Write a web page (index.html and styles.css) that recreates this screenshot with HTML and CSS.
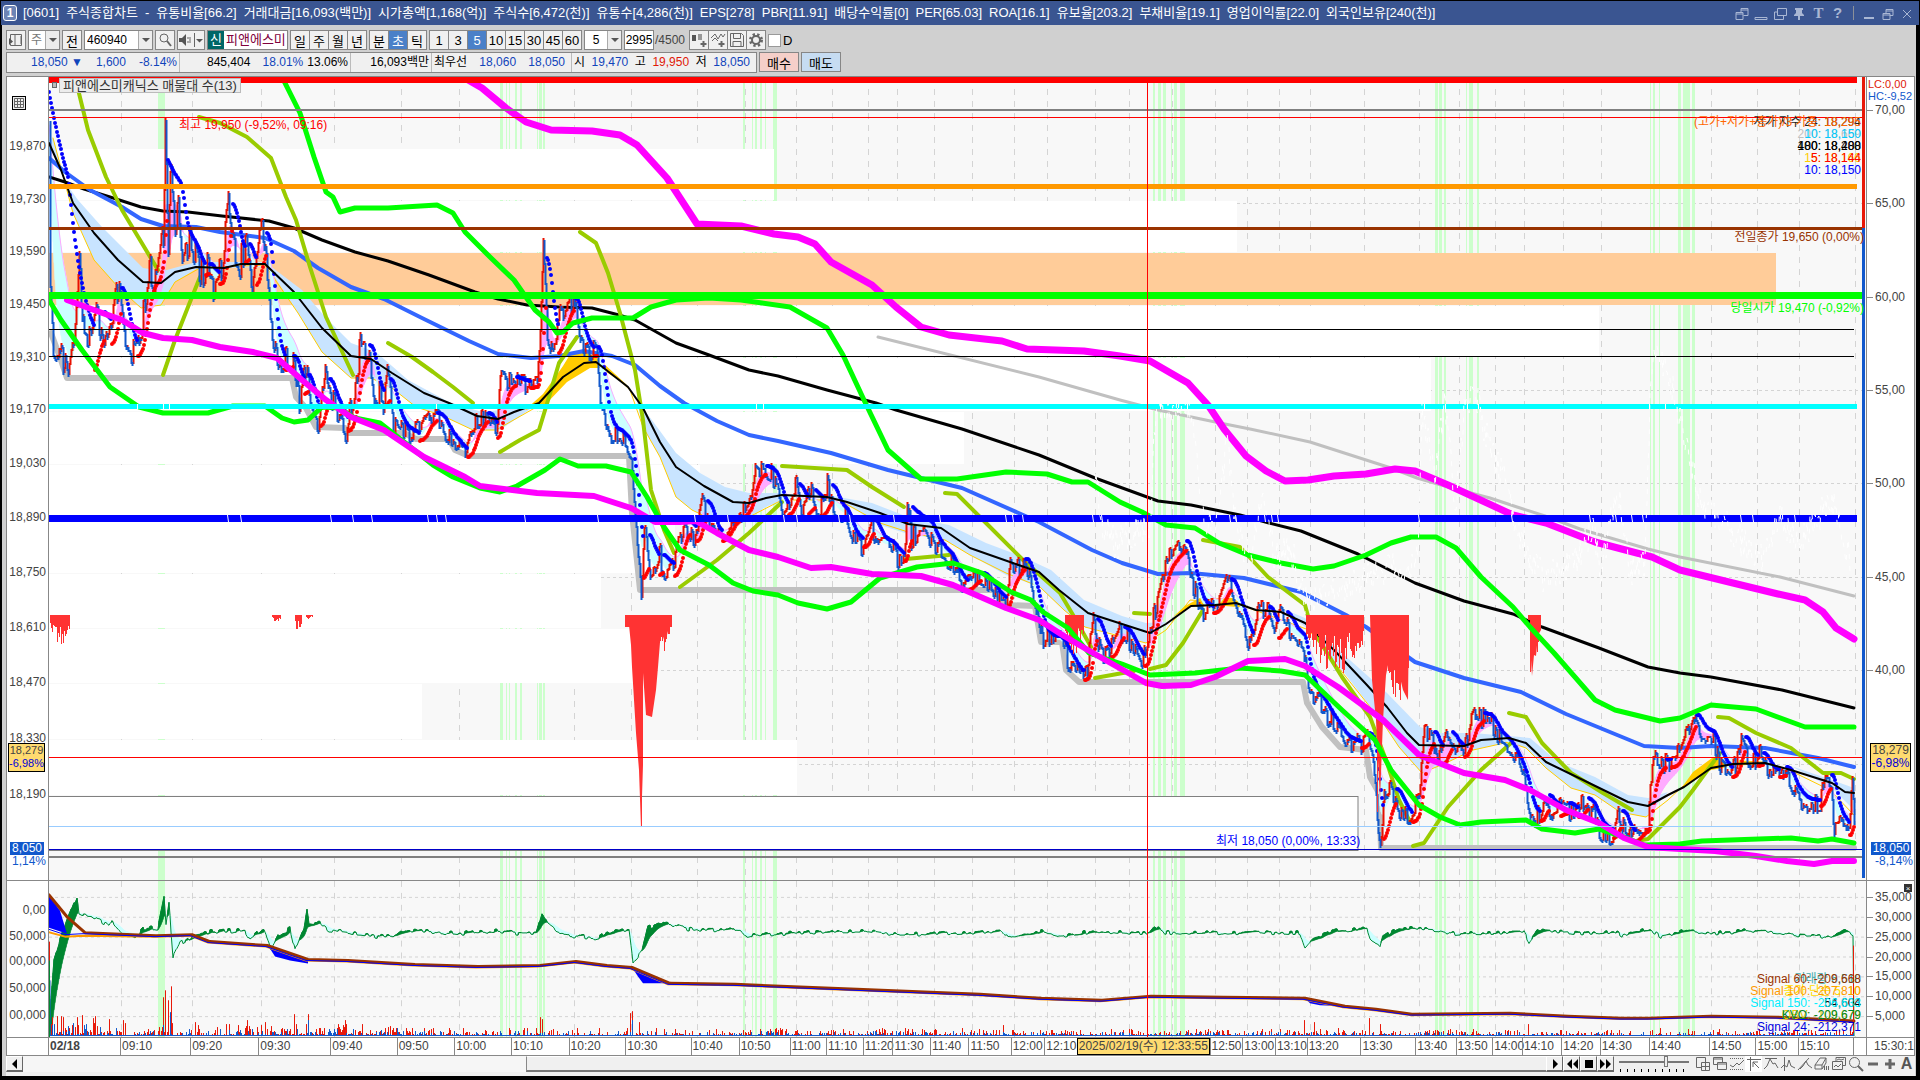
FILE: index.html
```html
<!DOCTYPE html>
<html lang="ko">
<head>
<meta charset="utf-8">
<title>[0601] 주식종합차트</title>
<link rel="stylesheet" href="styles.css">
</head>
<body>
<div class="window">
  <header class="titlebar">
    <span class="win-no">1</span>
    <h1 class="title"><span>[0601]</span><span>주식종합차트</span><span>-</span><span>유통비율[66.2]</span><span>거래대금[16,093(백만)]</span><span>시가총액[1,168(억)]</span><span>주식수[6,472(천)]</span><span>유통수[4,286(천)]</span><span>EPS[278]</span><span>PBR[11.91]</span><span>배당수익률[0]</span><span>PER[65.03]</span><span>ROA[16.1]</span><span>유보율[203.2]</span><span>부채비율[19.1]</span><span>영업이익률[22.0]</span><span>외국인보유[240(천)]</span></h1>
    <div class="win-tools">
      <button aria-label="화면 분리"><svg width="14" height="14"><path d="M1 5.500h7v7H1zM6 5V1.500h7v7H8.500M6 3h7M1 7h7"/></svg></button>
      <button aria-label="접기"><svg width="14" height="14"><path d="M1 10.500h12v2H1z"/></svg></button>
      <button aria-label="복제"><svg width="14" height="14"><path d="M4.500 1.500h9v7h-9zM4 5H1.500v7.500h9V9"/></svg></button>
      <button aria-label="고정"><svg width="14" height="14"><path class="solid" d="M3 1h8v2h-1v3l2 2v1H8v4H6V9H2V8l2-2V3H3z"/></svg></button>
      <button class="glyph serif" aria-label="글꼴">T</button>
      <button class="glyph" aria-label="도움말">?</button>
      <span class="win-rule"></span>
      <button aria-label="최소화"><svg width="14" height="14"><path class="solid" d="M2 10h10v2H2z"/></svg></button>
      <button aria-label="이전 크기"><svg width="14" height="14"><path d="M2 6.500h7v6H2zM5 6V2.500h7v6H9M5 4h7M2 8h7"/></svg></button>
      <button aria-label="닫기"><svg width="14" height="14"><path d="M3 3l8 8M11 3l-8 8"/></svg></button>
    </div>
  </header>

  <div class="body">
    <div class="toolbar">
      <button class="tool w-20" aria-label="메뉴"><svg width="16" height="14"><path d="M2.500 7V1.500h11v11h-11V11M7 1.500v11M13 3v8"/><path class="solid" d="M1 5l4 3.500L1 12z"/></svg></button>
      <label class="combo w-31"><span class="sr">구분</span><select><option>주</option></select><i></i></label>
      <button class="tool w-20">전</button>
      <label class="combo w-69 black"><span class="sr">종목코드</span><input type="text" value="460940"><i></i></label>
      <button class="tool w-20" aria-label="종목 검색"><svg width="16" height="16"><circle cx="7" cy="6" r="4"/><path class="thick" d="M10 9l4 5"/></svg></button>
      <button class="tool w-28" aria-label="소리"><svg width="26" height="14"><path class="dark" d="M1 5h3l4-4v12L4 9H1z"/><path d="M10 4v2M10 8v2M12 4v6M16.500 0v14"/><path class="solid" d="M18 6h7l-3.500 3.500z"/></svg></button>
      <div class="stock"><b>신</b><span>피앤에스미</span></div>
      <div class="seg"><button>일</button><button>주</button><button>월</button><button>년</button></div>
      <div class="seg"><button>분</button><button class="on">초</button><button>틱</button></div>
      <div class="seg"><button>1</button><button>3</button><button class="on">5</button><button>10</button><button>15</button><button>30</button><button>45</button><button>60</button></div>
      <label class="combo w-38 black"><span class="sr">주기</span><input type="text" value="5"><i></i></label>
      <label class="count"><span class="sr">조회 건수</span><input type="text" value="2995"><span>/4500</span></label>
      <div class="seg icons">
        <button aria-label="차트 추가"><svg width="16" height="16"><path class="dark" d="M1 3h4v6H1zM2.500 1v10"/><path class="mute" d="M7 2h4v6H7z"/><path class="thick" d="M12.500 9v6M9.500 12h6"/></svg></button>
        <button aria-label="지표 추가"><svg width="16" height="16"><path d="M1 6l4-4 3 5 3-5 2 3 2-3M2 9l3-3 3 3"/><path class="thick" d="M11.500 9v6M8.500 12h6"/></svg></button>
        <button aria-label="저장"><svg width="16" height="16"><path d="M1.500 1.500h11l2 2v11h-13zM4.500 1.500v5h7v-5M4 14V9.500h8V14"/></svg></button>
        <button aria-label="설정"><svg width="16" height="16"><circle class="cog" cx="8" cy="8" r="5"/><circle class="ring" cx="8" cy="8" r="4"/></svg></button>
      </div>
      <label class="check"><input type="checkbox"><span>D</span></label>
    </div>

    <div class="quote">
      <div class="strip">
        <div class="cell c-first down"><span>18,050 ▼</span><span>1,600</span><span>-8.14%</span></div>
        <div class="cell c-volume"><span>845,404</span><span class="pair"><span class="down">18.01%</span><span>13.06%</span></span></div>
        <div class="cell c-amount"><span>16,093백만</span></div>
        <div class="cell c-best"><span>최우선</span><span class="down">18,060</span><span class="down">18,050</span></div>
        <div class="cell grow"><span>시</span><span class="down">19,470</span><span>고</span><span class="up">19,950</span><span>저</span><span class="down">18,050</span></div>
      </div>
      <button class="order buy">매수</button>
      <button class="order sell">매도</button>
    </div>

    <main class="chart">
      <div class="axis left" id="left-main"><button class="grid-btn" aria-label="표 보기"><svg width="12" height="12"><path d="M1.500 1.500h9v9h-9zM1.500 4.500h9M1.500 7.500h9M4.500 1.500v9M7.500 1.500v9"/></svg></button></div>
      <div class="pane" id="pane-main"></div>
      <div class="axis right" id="right-main"></div>
      <div class="axis left lower" id="left-sub"></div>
      <div class="pane lower" id="pane-sub"></div>
      <div class="axis right lower" id="right-sub"><button class="pane-close" aria-label="지표 닫기">×</button></div>
      <div class="times-pad"></div>
      <div class="times" id="times"></div>
      <div class="times-end">15:30:1</div>
    </main>

    <footer class="bottom">
      <button class="nav" aria-label="왼쪽으로"><svg width="12" height="12"><path class="ink" d="M8 1v10L3 6z"/></svg></button>
      <div class="track"><div class="thumb"></div></div>
      <div class="play">
        <button class="nav" aria-label="오른쪽으로"><svg width="12" height="12"><path class="ink" d="M4 1v10l5-5z"/></svg></button>
        <button class="nav" aria-label="뒤로"><svg width="12" height="12"><path class="ink" d="M6 1v10L1 6zM12 1v10L7 6z"/></svg></button>
        <button class="nav" aria-label="정지"><svg width="12" height="12"><path class="ink" d="M2 2h8v8H2z"/></svg></button>
        <button class="nav" aria-label="앞으로"><svg width="12" height="12"><path class="ink" d="M0 1v10l5-5zM6 1v10l5-5z"/></svg></button>
      </div>
      <label class="zoomer"><span class="sr">확대 비율</span><input type="range" min="0" max="100" value="68"></label>
      <div class="draw">
        <button aria-label="창 추가"><svg width="16" height="16"><path d="M6 11.500H1.500V1.500h9V6M6.500 6.500h8v8h-8zM10.500 6v9M6 10.500h9"/></svg></button>
        <button aria-label="창 겹치기"><svg width="16" height="16"><path d="M1.500 1.500h9v7h-9zM1 3h10"/><path class="face" d="M5.500 6.500h9v7h-9z"/><path d="M5 8h10"/></svg></button>
        <button aria-label="구간"><svg width="16" height="16"><path class="dots" d="M1 2.500h14M1 13.500h14"/><path d="M1 9l3 2 4-4 2 2 5-5"/></svg></button>
        <button class="on" aria-label="십자선"><svg width="16" height="16"><path d="M1 3.500h14M4.500 1v14M7 6l6 6M7 11V6h5"/></svg></button>
        <button aria-label="수평선"><svg width="16" height="16"><path d="M2 2.500h12M1 13l3-3 3-7 3 5 2-1 3 5"/></svg></button>
        <button aria-label="수직선"><svg width="16" height="16"><path d="M4.500 1v14M1 12l3-3 3 2 2-7 2 6 4 2"/></svg></button>
        <button aria-label="추세선"><svg width="16" height="16"><path d="M1 14L12 2M3 13l3-3 3-5 2 4 4 3"/></svg></button>
        <button aria-label="지우기"><svg width="16" height="16"><path d="M1 9l5-7h6l-4 7zM1 9v4h7V9M8 13l4-6V2M10.500 10v4M12.500 10v4M14.500 10v4"/></svg></button>
        <button aria-label="차트 복사"><svg width="16" height="16"><path d="M5 5V1.500h9.500v8H12M6 4l2-1 2 1 3-1"/><path class="face" d="M1.500 5.500h10v8h-10z"/><path d="M3 11l2-2 2 2 3-3"/></svg></button>
        <button aria-label="돋보기"><svg width="16" height="16"><circle cx="6.500" cy="6.500" r="5"/><path class="thick" d="M10 10l5 5"/></svg></button>
        <button aria-label="축소"><svg width="16" height="16"><path class="bold" d="M3 8h10"/></svg></button>
        <button aria-label="확대"><svg width="16" height="16"><path class="bold" d="M3 8h10M8 3v10"/></svg></button>
        <button class="letter" aria-label="글자">A</button>
      </div>
    </footer>
  </div>
</div>
<script src="chart.js"></script>
</body>
</html>
```
FILE: styles.css
```css
* { box-sizing: border-box; }

body {
  margin: 0;
  background: #000;
  color: #000;
  font-family: "Liberation Sans", "Noto Sans CJK KR", sans-serif;
  font-size: 12px;
}

button, input, select { font: inherit; color: inherit; margin: 0; padding: 0; }
button { border: 0; background: none; cursor: pointer; }
svg { display: block; fill: none; stroke: #666; }
.sr { position: absolute; width: 1px; height: 1px; overflow: hidden; clip-path: inset(50%); }

.window { display: flex; flex-direction: column; height: 100vh; min-height: 600px; padding: 1px 1px 4px; }

.titlebar { display: flex; flex: none; align-items: center; gap: 6px; height: 24px; padding: 0 4px 0 2px; background: #3a5591; color: #fff; }
.win-no { width: 14px; height: 16px; border: 1px solid #fff; border-radius: 3px; background: #6d84b5; font-size: 12px; font-weight: bold; line-height: 14px; text-align: center; }
.title { display: flex; flex: 1; gap: 7px; min-width: 0; margin: 0; overflow: hidden; font-size: 13px; font-weight: normal; line-height: 24px; white-space: nowrap; }
.win-tools { display: flex; align-items: center; gap: 4px; }
.win-tools button { width: 15px; height: 20px; color: #a9b7d4; }
.win-tools svg { margin-top: 1px; stroke: #a9b7d4; }
.win-tools .solid { fill: #a9b7d4; stroke: none; }
.glyph { font-size: 15px; font-weight: bold; line-height: 20px; }
.serif { font-family: "Liberation Serif", serif; }
.win-rule { width: 1px; height: 14px; margin: 0 4px; background: #8b9099; }

.body { display: flex; flex: 1; flex-direction: column; min-height: 0; margin: 0 3px 0 1px; padding: 5px 1px 0 4px; background: #d0d0d0; }

.toolbar { display: flex; flex: none; gap: 2px; height: 20px; }
.w-20 { width: 20px; }
.w-28 { width: 28px; }
.w-31 { width: 32px; }
.w-38 { width: 38px; }
.w-69 { width: 69px; }
.tool, .combo, .stock, .count input { height: 20px; border: 1px solid #868686; background: #f0f0f0; }
.tool { display: flex; align-items: center; justify-content: center; font-size: 13px; }
.solid, .dark { fill: #555; stroke: none; }
.mute { fill: #999; stroke: none; }
.face { fill: #f0f0f0; }
.thick { stroke-width: 2; }
.ring { fill: #f0f0f0; stroke-width: 2; }
.cog { stroke-width: 4; stroke-dasharray: 2 2; }
.combo { display: flex; background: #fff; color: #777; }
.combo input, .combo select { flex: 1; min-width: 0; padding: 0 2px; border: 0; outline: 0; background: none; font-size: 12px; appearance: none; }
.w-38 input { text-align: center; }
.combo i { flex: none; width: 14px; border-left: 1px solid #aaa; background: #ececec; }
.combo i::after { content: ""; display: block; width: 0; margin: 7px 0 0 3px; border: 4px solid transparent; border-top-color: #555; }
.black { color: #000; }
.stock { display: flex; width: 81px; background: #fff; color: #80003c; font-size: 13px; line-height: 18px; white-space: nowrap; }
.stock b { flex: none; width: 16px; margin-right: 2px; background: #006666; color: #fff; font-weight: normal; text-align: center; }
.seg { display: flex; height: 20px; padding: 1px; gap: 1px; background: #868686; }
.seg button { width: 18px; height: 18px; background: #f0f0f0; font-size: 13px; }
.seg .on { background: #4a80c8; color: #fff; }
.icons { margin-left: 2px; }
.icons button { display: flex; align-items: center; justify-content: center; }
.count { display: flex; gap: 1px; align-items: center; color: #444; font-size: 12px; }
.count input { width: 30px; background: #fff; color: #000; text-align: center; }
.check { display: flex; align-items: center; gap: 2px; font-size: 13px; }
.check input { appearance: none; width: 13px; height: 13px; border: 1px solid #999; background: #fff; }

.quote { display: flex; flex: none; gap: 2px; height: 21px; margin-top: 2px; }
.strip { display: flex; width: 751px; border: 1px solid #868686; background: #f0f0f0; font-size: 12px; line-height: 19px; white-space: nowrap; }
.cell { display: flex; justify-content: space-between; padding: 0 2px; border-right: 1px solid #bbb; }
.c-first { width: 173px; padding-left: 24px; }
.c-volume { width: 171px; padding-left: 27px; }
.pair { display: flex; gap: 4px; }
.c-amount { width: 81px; justify-content: flex-end; }
.c-best { width: 140px; padding-right: 6px; }
.grow { flex: 1; border: 0; padding-right: 6px; }
.down { color: #1144bb; }
.up { color: #e01808; }
.order { width: 40px; height: 20px; border: 1px solid #868686; font-size: 13px; }
.buy { background: #f5cfc9; }
.sell { background: #c6dcf2; }

.chart {
  display: grid;
  flex: 1;
  grid-template: minmax(0, 803fr) minmax(0, 157fr) 19px / 41px minmax(0, 1fr) 48px;
  min-height: 0;
  margin-top: 3px;
  border: 1px solid #868686;
  border-bottom: 0;
  background: #fff;
}
.pane { position: relative; overflow: hidden; border-left: 1px solid #888; background: #f8f8f8; }
.pane svg { position: absolute; width: 100%; height: 100%; stroke: none; }
.lower { border-top: 1px solid #888; }
.axis { position: relative; overflow: hidden; color: #444; font-size: 12px; }
.right { border-left: 1px solid #888; }
.axis span { position: absolute; height: 12px; margin-top: -6px; line-height: 12px; white-space: nowrap; }
.left span { right: 2px; }
.right span { left: 8px; }
.right span.flush { left: 1px; font-size: 11px; }
.right span::before { content: ""; position: absolute; top: 6px; left: -8px; width: 6px; height: 1px; background: #888; }
.right span.bare::before { display: none; }
.axis .cursor { left: 1px; width: 37px; height: 29px; margin-top: -14px; border: 1px solid #000; background: #ffdb70; font-size: 11px; line-height: 13px; text-align: center; }
.right .cursor { left: 3px; width: 41px; font-size: 12px; }
.cursor b { display: block; color: #0000d8; font-weight: normal; }
.axis .last { left: 3px; width: 34px; height: 13px; background: #1158cc; color: #fff; line-height: 13px; text-align: center; }
.right .last { left: 4px; width: 40px; }
.right .cursor::before, .right .last::before { display: none; }
.axis .blue { color: #1158cc; }
.axis .red { color: #e01808; }
.grid-btn { position: absolute; top: 19px; left: 5px; border: 1px solid #000; background: #eee; }
.pane-close { position: absolute; top: 3px; right: 2px; width: 8px; height: 8px; background: #333; color: #fff; font-size: 8px; line-height: 7px; }

.note { position: absolute; height: 14px; margin-top: -7px; line-height: 14px; font-size: 12px; white-space: nowrap; }
.legend { position: absolute; top: 1px; left: 10px; height: 15px; padding: 0 3px; border: 1px solid #bbb; background: #ececec; color: #333; font-size: 13px; line-height: 13px; white-space: nowrap; }
.handle { position: absolute; top: 5px; left: 3px; width: 5px; height: 6px; border: 1px solid #666; background: #bbb; }

.times, .times-pad, .times-end { border-top: 1px solid #888; border-bottom: 1px solid #888; color: #444; font-size: 12px; line-height: 17px; white-space: nowrap; }
.times { display: flex; }
.times span { min-width: 0; padding-left: 1px; border-left: 1px solid #888; }
.times .day { font-weight: bold; }
.times .cursor { padding: 0; border: 1px solid #000; background: #ffdb70; line-height: 15px; text-align: center; }
.times-end { padding-left: 7px; border-left: 1px solid #888; }

.bottom { display: flex; flex: none; align-items: stretch; height: 20px; padding-bottom: 4px; background: #f0f0f0; }
.nav { display: flex; align-items: center; justify-content: center; width: 17px; border: 1px solid #fff; border-right-color: #666; border-bottom: 2px solid #666; background: #f0f0f0; }
.ink { fill: #000; stroke: none; }
.track { display: flex; flex: 1; justify-content: flex-end; background: #f6f6f6; }
.thumb { width: 67%; border-top: 1px solid #fff; border-left: 1px solid #888; border-bottom: 2px solid #777; background: #f0f0f0; }
.play { display: flex; }
.zoomer { display: flex; width: 80px; padding: 0 5px; background: repeating-linear-gradient(90deg, #000 0 1px, transparent 1px 7px) 6px 13px / 68px 3px no-repeat; }
.zoomer input { width: 70px; height: 11px; appearance: none; background: linear-gradient(#777, #777) center / 100% 2px no-repeat; }
.zoomer input::-webkit-slider-thumb { appearance: none; width: 4px; height: 11px; border: 1px solid #777; background: #eee; }
.draw { display: flex; }
.draw button { display: flex; align-items: center; justify-content: center; width: 17px; }
.draw .on { background: #fff; }
.dots { stroke-dasharray: 1 1; }
.bold { stroke-width: 3; }
.draw .letter { color: #555; font-size: 16px; font-weight: bold; }
```
FILE: chart.js
```js
const NS = 'http://www.w3.org/2000/svg';
const LEFT = 49, RIGHT = 1866;
const MAIN = { top: 77, height: 803 };
const SUB = { top: 880, height: 157 };

const xTicks = [
  [48, '02/18', 'day'], [121, '09:10'], [192, '09:20'], [261, '09:30'], [334, '09:40'], [401, '09:50'],
  [459, '10:00'], [516, '10:10'], [574, '10:20'], [631, '10:30'], [697, '10:40'], [745, '10:50'],
  [796, '11:00'], [832, '11:10'], [868, '11:20'], [897, '11:30'], [934, '11:40'], [972, '11:50'],
  [1014, '12:00'], [1047, '12:10'], [1079, '2025/02/19(수) 12:33:55', 'cursor'], [1215, '12:50'],
  [1247, '13:00'], [1279, '13:10'], [1310, '13:20'], [1364, '13:30'], [1419, '13:40'], [1459, '13:50'],
  [1495, '14:00'], [1524, '14:10'], [1563, '14:20'], [1601, '14:30'], [1650, '14:40'], [1711, '14:50'],
  [1757, '15:00'], [1799, '15:10'], [1855, '']
];

function parse(s) { return s.trim().split(/\s+/).map(p => p.split(',').map(Number)); }
function rand(i) { const v = Math.sin(i * 12.9898 + 4.1) * 43758.5453; return v - Math.floor(v); }

function surface(host, box) {
  const svg = document.createElementNS(NS, 'svg');
  svg.setAttribute('viewBox', `${LEFT} ${box.top} ${RIGHT - LEFT} ${box.height}`);
  svg.setAttribute('preserveAspectRatio', 'none');
  host.appendChild(svg);
  return (name, attrs) => {
    const el = document.createElementNS(NS, name);
    for (const k in attrs) el.setAttribute(k, attrs[k]);
    svg.appendChild(el);
  };
}
const line = (put, s, color, width, extra = {}) => put('polyline', {
  points: Array.isArray(s) ? s.join(' ') : s, fill: 'none', stroke: color, 'stroke-width': width, 'stroke-linejoin': 'round', 'stroke-linecap': 'round', ...extra });
const area = (put, s, color) => put('polygon', { points: s, fill: color });
const rect = (put, x, y, w, h, color, extra = {}) => put('rect', { x, y, width: w, height: h, fill: color, ...extra });
const hline = (put, y, color, h, x2 = RIGHT - 4) => rect(put, LEFT, y - h / 2, x2 - LEFT, h, color);

function sample(points) {
  const out = [];
  for (let k = 0, x = points[0][0]; x <= points[points.length - 1][0]; x++) {
    while (k < points.length - 2 && points[k + 1][0] < x) k++;
    const [x0, y0] = points[k], [x1, y1] = points[k + 1];
    out.push([x, y0 + (y1 - y0) * (x - x0) / (x1 - x0)]);
  }
  return out;
}
function ema(data, span) {
  let v = data[0][1];
  return data.map(([x, y]) => [x, v += (y - v) * 2 / (span + 1)]);
}
function ribbon(put, a, b, upColor, downColor) {
  let up = '', down = '';
  for (let i = 1; i < a.length; i++) {
    const d = `M${a[i - 1]}L${a[i]}L${b[i]}L${b[i - 1]}z`;
    if (a[i][1] < b[i][1]) up += d; else down += d;
  }
  put('path', { d: down, fill: downColor, stroke: downColor, 'stroke-width': .5 });
  put('path', { d: up, fill: upColor, stroke: upColor, 'stroke-width': .5 });
}

function backdrop(put, box, rows) {
  const bottom = box.top + box.height;
  [...xTicks.slice(1).filter(t => t[2] !== 'cursor').map(t => t[0]), 1095, 1129, 1172].forEach(x =>
    put('path', { d: `M${x + .5} ${box.top}V${bottom}`, stroke: '#d4d4d4', 'stroke-dasharray': '6 6' }));
  rows.forEach(y => put('path', { d: `M${LEFT} ${y + .5}H${RIGHT}`, stroke: '#d4d4d4', 'stroke-dasharray': '3 3' }));
  [[158, 7], [500, 3], [506, 1], [509, 1], [515, 2], [520, 2], [537, 1], [539, 3], [543, 2], [743, 2], [752, 1], [755, 2],
   [760, 2], [765, 1], [773, 4], [1153, 2], [1158, 3], [1163, 3], [1171, 1], [1174, 3], [1180, 5], [1435, 3], [1439, 3],
   [1444, 2], [1466, 1], [1469, 4], [1477, 2], [1650, 1], [1653, 2], [1659, 1], [1678, 3], [1683, 7], [1692, 3]]
    .forEach(([x, w]) => rect(put, x, box.top, w, box.height, '#ccffcc'));
}

function notes(host, box, list) {
  list.forEach(([x, y, text, color, align]) => {
    const el = document.createElement('span');
    el.className = 'note';
    el.textContent = text;
    el.style.top = (y - box.top) / box.height * 100 + '%';
    if (align) el.style.right = (RIGHT - x) / (RIGHT - LEFT) * 100 + '%';
    else el.style.left = (x - LEFT) / (RIGHT - LEFT) * 100 + '%';
    el.style.color = color;
    host.appendChild(el);
  });
}

/* ---------- price pane ---------- */
const mainHost = document.getElementById('pane-main');
const m = surface(mainHost, MAIN);
backdrop(m, MAIN, [110, 203, 297, 390, 483, 577, 670, 764]);
[[149, 200, 774], [201, 252, 1237], [306, 357, 1599], [358, 411, 1431], [412, 464, 964], [465, 518, 700], [519, 573, 675],
 [574, 628, 601], [629, 683, 640], [684, 739, 422], [740, 795, 797]]
  .forEach(([a, b, x]) => rect(m, LEFT, a, x - LEFT, b - a, '#fff'));
rect(m, LEFT, 253, 1727, 52, '#ffcc99');
rect(m, LEFT - 2, 796.5, 1311, 54, '#fff', { stroke: '#808080' });

line(m, '51,333 61,360 67,378 292,378 296,397 306,408 316,427 345,428 347,433 404,433 416,439 449,439 455,450 469,456 629,456 632,513 640,590 994,590 1006,605 1035,606 1041,642 1062,642 1066,670 1079,682 1303,682 1307,703 1322,727 1340,747 1366,750 1370,777 1379,793 1381,848 1854,848', '#c0c0c0', 6);

const bands = [
  '49,140 65,182 78,200 102,227 143,268 163,271 196,262 241,262 265,262 265,267 224,268 196,269 175,282 161,305 141,308 118,287 94,260 73,213 53,138',
  '265,262 302,290 326,318 351,343 376,352 408,380 449,402 482,412 500,410 539,403 500,430 473,430 441,415 416,407 392,388 371,378 351,378 322,352 298,313',
  '637,385 643,408 660,431 676,453 700,473 725,487 749,493 782,493 782,500 766,507 749,517 717,522 692,510 676,497 660,457 643,427 637,403',
  '782,494 827,495 872,503 908,517 949,525 986,543 1023,557 1051,570 1084,600 1122,616 1146,623 1166,622 1146,643 1113,633 1085,627 1064,610 1040,587 1006,575 970,555 945,540 908,534 880,525 839,500',
  '1281,608 1305,618 1342,653 1387,693 1420,727 1440,733 1473,733 1509,736 1530,738 1558,762 1595,777 1628,795 1648,798 1668,792 1646,817 1620,812 1595,795 1571,788 1546,768 1526,748 1509,742 1473,750 1448,762 1422,773 1399,747 1383,723 1342,670 1309,630',
  '1791,766 1832,780 1854,788 1854,810 1832,788'
];
bands.forEach(b => area(m, b, '#c8e4ff'));
area(m, '525,410 543,394 563,366 571,353 588,352 602,362 628,386 600,368 590,368 567,382 545,405', '#ffcc00');
area(m, '1173,617 1185,606 1200,598 1232,598 1250,608 1225,606 1190,607', '#ffcc00');
area(m, '1680,790 1693,772 1712,758 1730,758 1760,764 1733,766 1711,770 1695,780', '#ffcc00');
line(m, '53,138 73,213 94,260 118,287 141,308 161,305 175,282 200,268 265,265 298,313 322,352 351,378 371,378 392,388 416,407 441,415 473,430 496,430 540,405 571,355 590,352 630,390 643,427 660,457 676,497 692,510 717,522 749,517 782,500 839,500 880,523 908,532 945,540 970,555 1006,573 1040,587 1064,610 1085,627 1146,643 1166,630 1190,600 1235,603 1309,630 1342,672 1383,723 1399,747 1422,773 1448,762 1473,750 1509,742 1526,748 1546,768 1571,788 1595,795 1620,812 1646,817 1668,800 1711,760 1765,762 1791,771 1830,790 1854,815', '#ffcc00', 1);

/* price, its fast averages and the stop-and-reverse dots */
const base = sample(parse('49,125 50,290 53,345 62,360 65,348 69,372 75,330 79,262 84,340 90,345 97,310 105,345 112,320 118,285 124,330 130,345 135,355 142,320 150,270 156,285 163,230 165,120 168,250 171,150 174,225 178,200 182,255 190,245 196,255 200,275 206,265 213,283 222,270 228,197 233,240 240,262 247,245 252,290 258,240 263,235 268,272 272,345 278,370 286,358 293,362 299,395 306,375 310,410 318,425 324,375 330,405 340,415 346,430 353,400 360,350 368,348 375,395 383,405 387,375 392,415 400,430 418,438 430,415 440,420 450,440 465,455 475,425 485,415 496,437 500,380 510,380 520,385 537,383 540,325 543,235 547,330 552,355 560,315 567,305 573,300 580,340 588,355 592,350 597,350 600,400 608,435 620,435 630,450 634,500 641,588 644,525 650,575 655,570 660,555 664,575 674,565 684,522 694,540 702,500 708,520 716,540 724,530 735,515 745,510 751,495 755,468 763,470 775,478 783,515 790,500 797,485 802,515 810,490 818,515 827,485 835,512 846,515 852,540 862,545 870,520 878,545 890,545 898,558 904,558 907,495 911,540 918,530 925,530 934,545 950,560 958,580 964,588 975,575 985,580 998,600 1006,605 1010,563 1017,570 1023,560 1035,600 1042,640 1060,640 1068,660 1080,678 1087,670 1093,615 1100,650 1108,655 1118,628 1128,640 1142,665 1148,635 1156,605 1166,560 1178,550 1185,543 1190,575 1200,610 1212,610 1222,595 1228,580 1236,605 1250,645 1258,612 1268,610 1274,640 1280,612 1290,635 1303,640 1308,690 1318,700 1330,720 1345,742 1360,745 1367,735 1373,760 1380,848 1384,800 1390,790 1400,810 1410,820 1418,800 1424,735 1432,735 1438,765 1447,732 1455,755 1464,750 1470,725 1476,715 1482,718 1490,720 1498,738 1508,745 1518,765 1526,790 1531,820 1540,815 1545,795 1552,815 1562,805 1575,815 1585,800 1600,830 1612,835 1618,810 1628,841 1640,825 1648,828 1652,760 1665,765 1675,760 1682,745 1693,715 1700,735 1712,735 1720,765 1730,775 1738,755 1741,735 1750,765 1760,755 1768,775 1785,770 1795,795 1805,803 1820,803 1824,775 1830,780 1834,828 1845,825 1848,835 1852,780 1854,830'));
const price = base.map(([x, y], i) => [x, Math.min(846, y + (rand(Math.floor(i / 2)) - .5) * (x < 420 ? 34 : 20))]);
const fast = ema(base, 9), slow = ema(base, 30);
ribbon(m, fast, slow, '#ffaaff', '#ccffff');
line(m, slow, '#ffaaff', 1);

line(m, '49,177 65,182 84,189 110,197 141,207 163,211 188,212 222,216 269,221 294,228 322,240 355,252 388,261 429,275 475,292 498,299 527,305 559,307 592,308 619,315 635,320 676,343 709,355 749,370 778,376 827,390 876,403 896,410 962,429 1039,455 1095,478 1158,501 1191,505 1240,515 1269,523 1301,531 1358,554 1415,583 1464,601 1513,614 1542,627 1599,648 1648,667 1680,673 1711,677 1782,690 1854,708', '#000', 3);
line(m, '878,337 1039,377 1120,400 1158,410 1220,423 1250,429 1310,442 1363,459 1391,468 1417,478 1448,487 1490,498 1517,507 1545,516 1580,529 1648,549 1680,557 1780,577 1854,596', '#c0c0c0', 3);
line(m, '49,158 65,172 90,190 122,207 141,219 163,226 196,227 220,232 265,238 294,251 318,268 351,287 384,299 424,319 469,341 498,354 531,358 559,356 584,351 612,356 635,365 660,386 684,403 717,421 749,435 778,441 831,453 888,470 962,488 1039,522 1092,550 1122,563 1158,574 1191,573 1244,578 1301,592 1346,615 1366,627 1415,662 1464,678 1521,692 1566,714 1644,746 1680,748 1711,746 1765,748 1818,758 1854,767', '#3366ff', 4);
['75,77 88,130 106,177 122,210 143,245 158,270', '199,117 220,123 247,137 271,158 286,197 296,220 310,267 326,317 353,375',
 '163,375 175,340 188,307 200,277', '388,343 412,357 433,372 453,387 473,403', '500,452 520,440 539,430 549,397 559,363 577,337',
 '580,232 596,243 608,273 620,313 635,370 643,420 651,490 664,530 674,553', '680,587 717,560 749,533 782,502',
 '782,466 847,470 872,487 904,507', '906,559 949,555', '945,493 957,494 986,523 1023,560 1060,593 1076,620 1091,647',
 '1095,678 1134,671', '1134,613 1150,614', '1150,669 1166,665 1183,643 1203,610', '1203,540 1240,547 1268,577 1305,605 1311,627 1342,677 1370,717 1387,763 1399,800 1409,820',
 '1413,846 1424,843 1448,807 1481,770 1511,743', '1509,713 1526,717 1542,743 1571,773 1603,793 1632,810',
 '1636,841 1648,839 1680,807 1693,790 1720,753', '1718,717 1729,718 1756,733 1791,748 1823,773 1841,773 1854,779']
  .forEach(s => line(m, s, '#99cc00', 4));

/* price bars */
let upPath = '', downPath = '';
for (let i = 1; i < price.length; i++) {
  const [x, y] = price[i], py = price[i - 1][1];
  const d = `M${x + .5} ${Math.round(py)}V${Math.round(y + (y > py ? 2 : -2))}`;
  if (y < py || (y === py && rand(i) > .5)) upPath += d; else downPath += d;
}
m('path', { d: upPath, stroke: '#e81000', 'stroke-width': 2 });
m('path', { d: downPath, stroke: '#1158cc', 'stroke-width': 2 });

let rising = false, ep = 360, af = .02, sar = 90, redDots = '', blueDots = '';
ema(base, 3).forEach(([x, y]) => {
  sar += af * (ep - sar);
  if (rising) {
    if (y < ep) { ep = y; af = Math.min(.2, af + .02); }
    if (y > sar) { rising = false; sar = ep; ep = y; af = .04; }
  } else {
    if (y > ep) { ep = y; af = Math.min(.2, af + .02); }
    if (y < sar) { rising = true; sar = ep; ep = y; af = .04; }
  }
  const d = `M${x} ${Math.round(sar + (rising ? 3 : -3))}h0`;
  if (rising) redDots += d; else blueDots += d;
});
m('path', { d: redDots, stroke: '#ff0000', 'stroke-width': 4, 'stroke-linecap': 'round' });
m('path', { d: blueDots, stroke: '#0000ff', 'stroke-width': 4, 'stroke-linecap': 'round' });

line(m, '49,143 61,170 73,203 94,233 118,260 143,282 161,283 175,272 196,267 224,268 241,264 265,264 294,292 322,328 351,356 371,359 392,373 424,393 449,403 477,416 498,419 514,412 539,403 563,377 584,363 596,362 628,387 643,408 660,442 676,467 704,486 733,502 749,503 766,498 782,495 827,497 847,502 880,513 908,524 941,528 970,548 1010,562 1039,572 1059,590 1088,613 1122,624 1150,633 1166,624 1191,606 1215,605 1236,603 1256,610 1281,612 1305,623 1334,650 1366,684 1387,707 1407,733 1419,745 1464,746 1481,740 1509,738 1526,743 1546,762 1583,780 1628,802 1648,806 1668,795 1684,787 1711,768 1733,764 1765,763 1791,770 1832,783 1845,792 1854,793', '#000', 2);

/* red histogram hanging from its zero line */
const HANG = '#ff3333';
area(m, '628,615 631,645 632,667 636,733 639,770 641,828 643,765 643,673 646,715 652,717 656,690 658,667 661,630 665,643 672,615', HANG);
area(m, '1370,615 1372,680 1376,720 1380,800 1383,720 1386,675 1390,655 1397,665 1403,690 1408,700 1409,615', HANG);
area(m, '1530,615 1531,660 1532,676 1534,655 1536,656 1538,635 1541,630 1541,615', HANG);
let bars = '';
[[50, 70, 8, 30], [272, 281, 2, 9], [295, 302, 3, 20], [306, 313, 0, 6], [1065, 1084, 12, 42], [1306, 1363, 18, 62], [646, 672, 10, 40], [1386, 1409, 45, 90], [1530, 1541, 8, 50]]
  .forEach(([a, b, lo, hi]) => { for (let x = a; x < b; x++) bars += `M${x + .5} 615v${Math.round(lo + (hi - lo) * rand(x) * Math.sin((x - a + 1) / (b - a + 1) * 2.9))}`; });
m('path', { d: bars + 'M641.500 615V826M1377.500 615V812M1530.500 615V672', stroke: HANG, 'stroke-width': 1 });
rect(m, 625, 615, 47, 12, HANG);
rect(m, 1065, 615, 19, 12, HANG);
rect(m, 1306, 615, 58, 16, HANG);
rect(m, 1528, 615, 12, 5, HANG);

line(m, '463,77 482,88 506,108 526,122 551,130 592,131 620,135 637,145 667,178 697,224 741,226 774,234 798,237 815,244 831,262 872,285 896,307 921,327 949,335 1002,341 1027,349 1084,351 1120,356 1150,361 1188,383 1208,405 1224,429 1246,456 1266,471 1285,481 1308,480 1334,476 1366,474 1395,469 1415,471 1448,485 1513,515 1546,523 1595,542 1652,557 1680,570 1733,583 1778,594 1805,600 1823,612 1836,628 1854,639', '#ff00ff', 7);
line(m, '282,77 300,113 314,157 326,192 333,197 340,212 355,208 388,208 437,205 453,213 465,232 490,257 514,280 535,310 549,322 557,333 563,332 573,323 592,318 633,318 651,307 676,300 709,298 741,300 790,307 827,328 843,355 864,400 888,450 921,479 957,479 1006,472 1047,474 1072,482 1088,482 1120,502 1142,512 1166,525 1195,528 1219,543 1248,555 1281,563 1313,569 1334,566 1366,555 1391,543 1411,537 1436,537 1456,548 1481,577 1513,607 1530,627 1554,653 1595,700 1615,710 1660,721 1680,718 1711,705 1756,709 1805,727 1854,727', '#00ff00', 5);
line(m, '49,300 61,320 82,350 110,387 139,407 163,413 208,413 233,406 265,406 282,418 294,422 308,420 322,407 339,408 355,418 380,423 408,445 433,465 453,477 480,488 500,492 517,486 545,470 560,459 578,466 606,466 631,472 647,497 664,527 680,550 709,565 733,583 753,591 778,595 798,603 827,609 851,602 880,578 917,567 953,563 982,573 1011,592 1031,600 1043,612 1068,628 1089,653 1122,664 1150,675 1195,673 1240,668 1281,671 1305,675 1342,710 1375,740 1391,770 1419,805 1440,817 1460,825 1481,822 1526,820 1542,829 1575,833 1599,829 1624,837 1644,845 1680,844 1702,841 1791,838 1818,841 1832,839 1854,843', '#00ff00', 5);
line(m, '67,300 94,310 122,320 143,333 163,338 192,340 220,347 253,352 277,358 302,380 326,400 351,417 384,430 424,457 465,477 480,486 537,493 594,496 631,508 655,522 680,522 696,521 717,533 749,550 778,557 811,568 831,567 872,574 921,576 953,585 1006,608 1039,620 1064,636 1093,653 1146,683 1162,686 1191,685 1215,677 1248,661 1285,659 1305,666 1338,687 1383,720 1419,755 1464,773 1505,780 1530,790 1566,810 1599,823 1624,838 1648,847 1680,849 1715,851 1756,856 1787,861 1814,864 1832,861 1854,861', '#ff00ff', 6);

hline(m, 80, '#ff0000', 6, 1857);
hline(m, 110, '#808080', 2);
hline(m, 117.5, '#ff0000', 1);
hline(m, 186.5, '#ff9900', 5, 1857);
hline(m, 228.5, '#993300', 3);
hline(m, 295.5, '#00ff00', 7);
hline(m, 329.5, '#000', 1, 1854);
hline(m, 356.5, '#000', 1, 1854);
hline(m, 406.5, '#00ffff', 5, 1857);
hline(m, 518.5, '#0000ff', 7, 1857);

/* faint white indicator trace */
const trace = sample(parse('1093,450 1100,520 1115,545 1150,520 1156,410 1187,400 1195,440 1200,510 1215,530 1228,440 1236,530 1250,560 1262,490 1275,560 1290,545 1305,600 1418,560 1422,410 1435,470 1445,400 1455,510 1466,395 1478,400 1490,450 1505,480 1520,540 1545,580 1575,560 1595,530 1600,570 1618,490 1630,575 1645,560 1650,400 1655,346 1670,380 1680,420 1700,500 1760,560 1780,520 1800,540 1832,500 1850,560'))
  .map(([x, y]) => [x, Math.round(y + (rand(x * 3) - .5) * 34)]);
line(m, trace, '#fff', 1, { 'stroke-dasharray': '5 7', 'stroke-linecap': 'butt' });
let nicks = '';
[227, 240, 330, 352, 371, 427, 436, 445, 524, 597, 694, 727, 783, 796, 838, 849, 893, 939, 1005, 1012, 1022, 1092, 1101, 1229, 1235, 1264, 1271, 1277, 1418, 1511, 1589, 1615, 1631, 1642, 1740, 1752, 1794]
  .forEach(x => { nicks += `M${x + .5} 515l1 7`; });
[137, 163, 169, 436, 756, 763, 1160, 1187, 1424, 1445, 1467, 1478, 1649, 1665].forEach(x => { nicks += `M${x + .5} 404v5`; });
m('path', { d: nicks, stroke: '#fff' });

hline(m, 826.5, '#99ccff', 1, 1832);
hline(m, 849.5, '#0000c8', 1);
hline(m, 857, '#808080', 2);
hline(m, 757.5, '#ff0000', 1);
rect(m, 1147, 77, 1, 803, '#ff0000');
rect(m, 1862, 77, 3, 151, '#e81808');
rect(m, 1862, 228, 3, 650, '#1158cc');

mainHost.insertAdjacentHTML('beforeend', '<i class="handle"></i><span class="legend">피앤에스미캐닉스 매물대 수(13)</span>');
notes(mainHost, MAIN, [
  [179, 125, '최고 19,950 (-9,52%, 09:16)', '#ff0000'],
  [1216, 841, '최저 18,050 (0,00%, 13:33)', '#0000ff'],
  [1864, 237, '전일종가 19,650 (0,00%)', '#993300', 1],
  [1864, 308, '당일시가 19,470 (-0,92%)', '#00ff00', 1],
  [1861, 122, '저가 지수 24: 18,294', '#222', 1],
  [1861, 122, '(고가+저가+종가)/3 가중: 18,295', '#ff6600', 1],
  [1861, 134, '200: 18,669', '#c0c0c0', 1],
  [1861, 134, '10: 18,150', '#00ccff', 1],
  [1861, 146, '100: 18,288', '#000', 1],
  [1861, 146, '480: 18,400', '#000', 1],
  [1861, 158, '15: 18,166', '#ffcc00', 1],
  [1861, 158, '5: 18,144', '#ff0000', 1],
  [1861, 170, '30: 18,190', '#c8e4ff', 1],
  [1861, 170, '10: 18,150', '#0000ff', 1]
]);

/* ---------- indicator pane ---------- */
const subHost = document.getElementById('pane-sub');
const s = surface(subHost, SUB);
backdrop(s, SUB, [896, 916, 936, 956, 976, 996, 1016]);
const kvo = sample(parse('49,1036 51,1000 54,960 60,940 67,920 77,895 79,913 94,917 109,925 112,920 123,933 134,937 143,928 158,927 164,897 166,925 169,903 173,955 179,943 196,933 223,930 245,930 250,938 263,928 271,948 279,933 290,928 295,950 304,927 307,909 309,923 321,923 330,930 393,937 402,930 464,933 478,930 536,933 542,912 549,925 560,935 598,937 607,932 629,930 633,963 641,953 647,927 661,923 700,930 740,928 745,935 800,932 870,930 900,934 1000,931 1005,936 1040,930 1060,936 1090,931 1147,933 1155,925 1165,932 1250,932 1300,932 1305,947 1313,938 1332,930 1367,928 1371,940 1380,947 1383,935 1399,927 1421,928 1452,933 1524,932 1529,941 1537,930 1599,933 1613,930 1622,935 1649,928 1661,936 1684,930 1711,933 1747,930 1832,937 1845,930 1853,935 1854,1036'))
  .map(([x, y]) => [x, y + (rand(Math.floor(x / 3)) - .5) * (x < 700 ? 5 : 4)]);
ribbon(s, kvo, ema(kvo, 14), '#008833', '#ccffff');
line(s, kvo, '#008833', 1);
area(s, '49,894 60,910 67,933 55,929 49,927', '#0000ff');
area(s, '268,945 308,959 308,963 290,960 275,956', '#0000ff');
area(s, '632,967 670,983 643,983 638,976', '#0000ff');
area(s, '1305,998 1345,1006 1320,1005 1310,1003', '#0000ff');
const sig = '156,935 192,934 210,941 268,945 308,959 348,960 415,964 478,966 540,965 576,961 607,965 632,967 670,983 735,984 857,989 980,994 1041,998 1102,1000 1151,996 1224,997 1305,998 1345,1006 1376,1009 1412,1014 1510,1013 1568,1016 1622,1018 1649,1018 1711,1016 1778,1017 1854,1021';
line(s, '49,930 67,935 85,934 ' + sig, '#ff9900', 2, { transform: 'translate(-2 1)' });
line(s, '49,894 67,916 85,932 ' + sig, '#993300', 3);
line(s, '49,927 67,933 85,932 ' + sig, '#0000ff', 1, { transform: 'translate(-2 1)' });

let volRed = '', volBlue = '';
for (let x = 50; x < 1854; x++) {
  const amp = x < 110 ? 16 : x < 400 ? 10 : x < 1000 ? 6 : 5;
  volRed += `M${x + .5} 1036v-${Math.ceil(Math.pow(rand(x), 4) * amp * 1.3)}`;
  volBlue += `M${x + .5} 1036v-${1 + Math.floor(Math.pow(rand(x + 9), 6) * amp * .8)}`;
}
[[49, 941], [61, 1016], [77, 1017], [123, 1020], [163, 997], [165, 990], [168, 1000], [171, 986], [195, 1022], [226, 1024], [247, 1020],
 [265, 1022], [294, 1014], [308, 1014], [345, 1020], [540, 1017], [542, 1019], [630, 1013], [632, 1011], [639, 1022], [1003, 1025],
 [1304, 1020], [1314, 1022], [1338, 1028], [1369, 1018], [1380, 1024], [1528, 1024], [1660, 1028], [1850, 1027], [1853, 945]]
  .forEach(([x, y]) => { volRed += `M${x + .5} 1036V${y}`; });
s('path', { d: volRed, stroke: '#e81808' });
s('path', { d: volBlue + 'M50 1036V980M163.500 1036V1025M170.500 1036V1012M308.500 1036V1020M632.500 1036V1020', stroke: '#1158cc' });
rect(s, 49, 960, 1, 77, '#008833');
rect(s, 1147, 880, 1, 157, '#ff0000');
notes(subHost, SUB, [
  [1861, 979, '거래량 6,510', '#44aaaa', 1],
  [1861, 979, 'Signal 60: -209,668', '#993300', 1],
  [1861, 991, '종가 단순 5: 10', '#ffdd00', 1],
  [1861, 991, 'Signal 100: -207,810', '#ff9900', 1],
  [1861, 1003, '54,604', '#000', 1],
  [1861, 1003, 'Signal 150: -206,633', '#00eeff', 1],
  [1861, 1015, 'OBV: -109,679', '#ddcc00', 1],
  [1861, 1015, 'KVO: -209,679', '#008833', 1],
  [1861, 1027, 'Signal 24: -212,371', '#0000e0', 1]
]);

/* ---------- axes ---------- */
function labels(id, box, list) {
  const host = document.getElementById(id);
  list.forEach(([y, text, cls, second]) => {
    const el = document.createElement('span');
    el.textContent = text;
    if (cls) el.className = cls;
    if (second) { const b = document.createElement('b'); b.textContent = second; el.appendChild(b); }
    el.style.top = (y - box.top) / box.height * 100 + '%';
    host.appendChild(el);
  });
}
labels('left-main', MAIN, [[146, '19,870'], [199, '19,730'], [251, '19,590'], [304, '19,450'], [357, '19,310'], [409, '19,170'],
  [463, '19,030'], [517, '18,890'], [572, '18,750'], [627, '18,610'], [682, '18,470'], [738, '18,330'], [794, '18,190'],
  [757, '18,279', 'cursor', '-6,98%'], [848, '8,050', 'last'], [861, '1,14%', 'blue']]);
labels('right-main', MAIN, [[84, 'LC:0,00', 'flush bare red'], [96, 'HC:-9,52', 'flush bare blue'], [110, '70,00'], [203, '65,00'], [297, '60,00'],
  [390, '55,00'], [483, '50,00'], [577, '45,00'], [670, '40,00'], [757, '18,279', 'cursor', '-6,98%'], [848, '18,050', 'last'], [861, '-8,14%', 'bare blue']]);
labels('left-sub', SUB, [[909, '0,00'], [935, '50,000'], [961, '00,000'], [988, '50,000'], [1015, '00,000']]);
labels('right-sub', SUB, [[896, '35,000'], [916, '30,000'], [936, '25,000'], [956, '20,000'], [976, '15,000'], [996, '10,000'], [1016, '5,000']]);

const times = document.getElementById('times');
xTicks.forEach(([x, text, cls], i) => {
  const el = document.createElement('span');
  el.textContent = text;
  if (cls) el.className = cls;
  el.style.flex = ((xTicks[i + 1] || [RIGHT])[0] - x) + ' 1 0';
  times.appendChild(el);
});
```
